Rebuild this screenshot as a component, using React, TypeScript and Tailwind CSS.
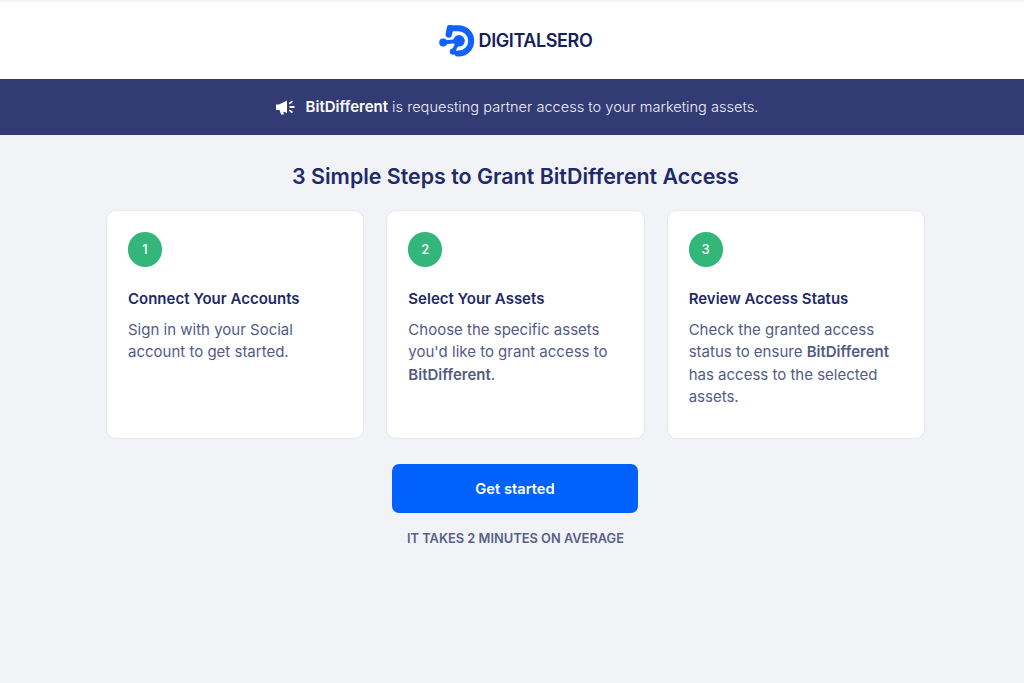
import React from "react";

const Logo = () => (
  <svg width="36" height="32" viewBox="0 0 36 32" fill="none">
    <path d="M11 3.2 H19.5 A12.7 12.7 0 0 1 19.5 28.6 H18.5" stroke="#0f62fe" strokeWidth="6" strokeLinecap="round" />
    <path d="M11 3.2 L9.8 9.5" stroke="#0f62fe" strokeWidth="6.5" strokeLinecap="round" />
    <circle cx="20" cy="15.8" r="5.8" fill="#0f62fe" />
    <circle cx="4.2" cy="17.5" r="4" fill="#0f62fe" />
    <circle cx="14" cy="26.6" r="3.2" fill="#0f62fe" />
    <path d="M4.5 17.5 L20 15.8 M14 26.6 L20 15.8" stroke="#0f62fe" strokeWidth="3.8" />
  </svg>
);

const Megaphone = () => (
  <svg width="20" height="15" viewBox="0 0 20 15" fill="#fff">
    <path d="M0 4.5 H3 L11 0.5 V13 L3 10 H0 Z" />
    <path d="M3.5 9.5 H6.8 L7.8 14.5 H5 Z" />
    <path d="M13.5 6 H18.5 V8 H13.5 Z" />
    <path d="M12.8 3 L16 0.4 L17 1.8 L13.8 4.4 Z" />
    <path d="M13.8 9.4 L17 11.8 L16 13.2 L12.8 10.8 Z" />
  </svg>
);

const Card = ({ n, title, children }: { n: number; title: string; children: React.ReactNode }) => (
  <div className="h-[229px] rounded-[10px] border border-[#e6e8ef] bg-white pl-[21px] pr-4 pt-[21px]">
    <div className="flex h-[35px] w-[34px] items-center justify-center rounded-full bg-[#32b67a] text-[13px] font-medium text-white">
      {n}
    </div>
    <h3 className="mt-[20px] text-[15px] font-semibold leading-[24px] text-[#1f2a68]">{title}</h3>
    <p className="mt-[7.7px] text-[15px] leading-[22.6px] text-[#545b85]">{children}</p>
  </div>
);

export default function App() {
  return (
    <div className="flex h-[683px] flex-col bg-[#f1f3f7] font-['Inter',sans-serif]">
      <header className="flex h-[79px] items-center justify-center gap-[4px] border-t-2 border-[#f1f3f7] bg-white pl-[7px]">
        <Logo />
        <span className="text-[18px] font-semibold tracking-[-0.4px] text-[#15205c]">DIGITALSERO</span>
      </header>
      <div className="flex h-[56px] items-center justify-center gap-[10px] bg-[#323b74] pl-[10px] text-[14.6px] font-light text-[#eceef5]">
        <Megaphone />
        <span>
          <b className="text-[15px] font-semibold text-white">BitDifferent</b> is requesting partner access to your marketing assets.
        </span>
      </div>
      <main className="flex flex-col items-center pl-[7px]">
        <h1 className="mt-[26px] text-[21.4px] font-semibold leading-[30px] text-[#1f2a68]">
          3 Simple Steps to Grant BitDifferent Access
        </h1>
        <div className="mt-[19px] grid w-[819px] grid-cols-3 gap-[22px]">
          <Card n={1} title="Connect Your Accounts">
            Sign in with your Social account to get started.
          </Card>
          <Card n={2} title="Select Your Assets">
            Choose the specific assets you'd like to grant access to <b className="font-semibold">BitDifferent</b>.
          </Card>
          <Card n={3} title="Review Access Status">
            Check the granted access status to ensure <b className="font-semibold">BitDifferent</b> has access to the selected assets.
          </Card>
        </div>
        <button className="mt-[25px] -ml-px h-[49px] w-[246px] rounded-[7px] bg-[#0061ff] pt-px text-[14.7px] font-semibold text-white">
          Get started
        </button>
        <p className="mt-[17px] text-[12.85px] font-semibold leading-[18px] text-[#5a6188]">IT TAKES 2 MINUTES ON AVERAGE</p>
      </main>
    </div>
  );
}
